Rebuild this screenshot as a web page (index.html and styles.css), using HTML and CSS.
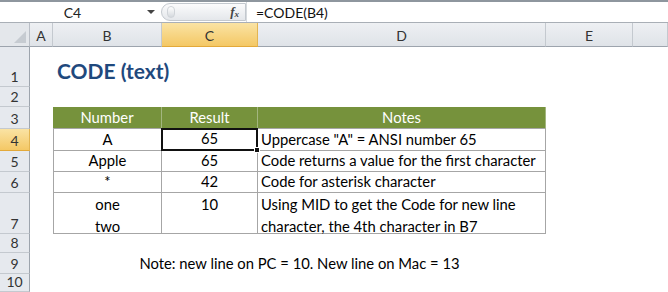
FILE: index.html
```html
<!DOCTYPE html>
<html lang="en">
<head>
  <meta charset="UTF-8">
  <title>CODE (text)</title>
  <link rel="stylesheet" href="styles.css">
</head>
<body>
  <div class="bar">
    <div class="namebox">
      <span class="ref">C4</span>
      <span class="drop"></span>
    </div>
    <div class="pill">
      <span class="knob"></span>
      <span class="fx">f<sub>x</sub></span>
    </div>
    <div class="formula">=CODE(B4)</div>
  </div>

  <div class="sheet">
    <!-- column headers -->
    <div class="corner"><span class="tri"></span></div>
    <div class="ch">A</div>
    <div class="ch">B</div>
    <div class="ch on">C</div>
    <div class="ch">D</div>
    <div class="ch">E</div>
    <div class="ch"></div>

    <!-- row 1 -->
    <div class="rh">1</div>
    <div></div>
    <div class="title">CODE (text)</div>
    <div></div><div></div><div></div><div></div>

    <!-- row 2 -->
    <div class="rh">2</div>
    <div></div><div></div><div></div><div></div><div></div><div></div>

    <!-- row 3 -->
    <div class="rh">3</div>
    <div></div>
    <div class="c head">Number</div>
    <div class="c head">Result</div>
    <div class="c head">Notes</div>
    <div></div><div></div>

    <!-- row 4 -->
    <div class="rh on">4</div>
    <div></div>
    <div class="c first">A</div>
    <div class="c sel">65<span class="handle"></span></div>
    <div class="c note">Uppercase "A" = ANSI number 65</div>
    <div></div><div></div>

    <!-- row 5 -->
    <div class="rh">5</div>
    <div></div>
    <div class="c first">Apple</div>
    <div class="c">65</div>
    <div class="c note">Code returns a value for the first character</div>
    <div></div><div></div>

    <!-- row 6 -->
    <div class="rh">6</div>
    <div></div>
    <div class="c first">*</div>
    <div class="c">42</div>
    <div class="c note">Code for asterisk character</div>
    <div></div><div></div>

    <!-- row 7 -->
    <div class="rh">7</div>
    <div></div>
    <div class="c first two">one<br>two</div>
    <div class="c top">10</div>
    <div class="c note two">Using MID to get the Code for new line<br>character, the 4th character in B7</div>
    <div></div><div></div>

    <!-- row 8 -->
    <div class="rh">8</div>
    <div></div><div></div><div></div><div></div><div></div><div></div>

    <!-- row 9 -->
    <div class="rh">9</div>
    <div></div>
    <div class="footnote">Note: new line on PC = 10. New line on Mac = 13</div>
    <div></div><div></div>

    <!-- row 10 -->
    <div class="rh">10</div>
    <div></div><div></div><div></div><div></div><div></div><div></div>
  </div>
</body>
</html>
```

FILE: styles.css
```css
/* ===== Reset ===== */
* {
  margin: 0;
  padding: 0;
  box-sizing: border-box;
}

body {
  width: 668px;
  height: 292px;
  overflow: hidden;
  background: #fff;
  font-family: Lato, "Liberation Sans", sans-serif;
  font-size: 14.8px;
  color: #000;
}

/* ===== Formula bar ===== */
.bar {
  display: flex;
  height: 23px;
  border-top: 2px solid #8e969e;
  border-bottom: 1px solid #a9afb6;
  background: #fff;
}

.namebox {
  width: 161px;
  display: flex;
  align-items: center;
}

.ref {
  flex: 1;
  text-align: center;
  font-size: 14px;
  color: #222;
  padding-right: 2px;
}

.drop {
  width: 0;
  height: 0;
  border-left: 4px solid transparent;
  border-right: 4px solid transparent;
  border-top: 4px solid #444;
  margin-right: 6px;
}

.pill {
  width: 85px;
  margin: 1px 0;
  border: 1px solid #c3c8ce;
  border-radius: 10px 0 0 10px;
  background: linear-gradient(#fbfbfc, #e4e7eb);
  display: flex;
  align-items: center;
  justify-content: space-between;
  padding: 0 6px 0 5px;
}

.knob {
  width: 8px;
  height: 12px;
  border-radius: 5px;
  background: linear-gradient(#ffffff, #d5d9de);
  border: 1px solid #d0d4d9;
}

.fx {
  font-family: "Liberation Serif", serif;
  font-style: italic;
  font-weight: bold;
  font-size: 13px;
  color: #444;
}

.fx sub {
  font-size: 9px;
  vertical-align: -1px;
}

.formula {
  flex: 1;
  border-left: 1px solid #d6dade;
  padding-left: 9px;
  display: flex;
  align-items: center;
  font-size: 14px;
  color: #111;
}

/* ===== Grid ===== */
.sheet {
  display: grid;
  grid-template-columns: 30px 23px 109px 96px 288px 87px 1fr;
  grid-template-rows: 24px 40px 20px 22px 22px 21px 21px 41px 19px 21px 18px;
}

.corner {
  background: #e4e7eb;
  border-right: 1px solid #b9bec6;
  border-bottom: 1px solid #9da4ad;
  position: relative;
}

.tri {
  position: absolute;
  right: 3px;
  bottom: 3px;
  width: 0;
  height: 0;
  border-left: 12px solid transparent;
  border-bottom: 12px solid #c6cbd1;
}

.ch {
  background: linear-gradient(#eef0f3, #dfe3e8);
  border-right: 1px solid #c4c9cf;
  border-bottom: 1px solid #9da4ad;
  display: flex;
  align-items: center;
  justify-content: center;
  padding-top: 2px;
  font-size: 14px;
  color: #333;
}

.rh {
  background: #e6e9ee;
  border-right: 1px solid #9da4ad;
  border-bottom: 1px solid #c4c9cf;
  display: flex;
  align-items: flex-end;
  justify-content: center;
  padding-bottom: 1px;
  font-size: 14px;
  color: #333;
}

.ch.on,
.rh.on {
  background: linear-gradient(#fae3a4, #f4c865);
  border-bottom-color: #e3a93a;
  border-right-color: #e3b552;
  color: #333;
}

/* ===== Cells ===== */
.title {
  display: flex;
  align-items: flex-end;
  padding: 0 0 4px 4px;
  font-size: 21px;
  font-weight: bold;
  color: #1f497d;
  white-space: nowrap;
}

.c {
  border-right: 1px solid #a6a6a6;
  border-bottom: 1px solid #a6a6a6;
  display: flex;
  align-items: flex-end;
  justify-content: center;
  padding-bottom: 1px;
  line-height: 20px;
  white-space: nowrap;
}

.c.first {
  border-left: 1px solid #a6a6a6;
}

.c.head {
  background: #76923c;
  color: #fff;
  border-right-color: #a3b67f;
  border-bottom-color: #a6a6a6;
}

.c.note {
  justify-content: flex-start;
  padding-left: 3px;
}

.c.two {
  align-items: flex-start;
  padding-bottom: 0;
  line-height: 22px;
  text-align: center;
}

.c.note.two {
  text-align: left;
}

.c.top {
  align-items: flex-start;
  line-height: 22px;
}

.c.sel {
  position: relative;
  border: 2px solid #111;
  margin: -1px 0 0 -1px;
}

.handle {
  position: absolute;
  right: -4px;
  bottom: -4px;
  width: 6px;
  height: 6px;
  background: #111;
  border: 1px solid #fff;
}

.footnote {
  grid-column: span 3;
  display: flex;
  align-items: flex-end;
  justify-content: center;
  padding-bottom: 2px;
  white-space: nowrap;
}
```
